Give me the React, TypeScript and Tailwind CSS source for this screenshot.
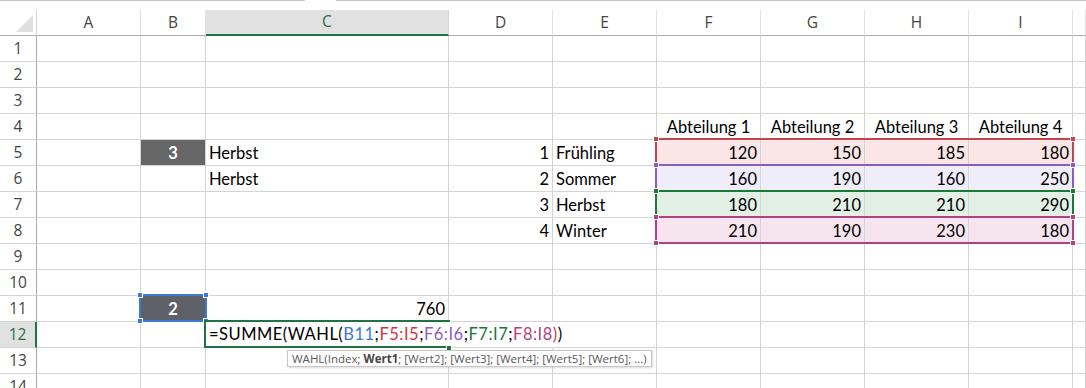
import React from "react";

const COLS = ["A", "B", "C", "D", "E", "F", "G", "H", "I", "J"];
const ROWS = Array.from({ length: 14 }, (_, i) => i + 1);

const data: Record<number, number[]> = {
  5: [120, 150, 185, 180],
  6: [160, 190, 160, 250],
  7: [180, 210, 210, 290],
  8: [210, 190, 230, 180],
};
const seasons: Record<number, [string, string]> = {
  5: ["1", "Frühling"],
  6: ["2", "Sommer"],
  7: ["3", "Herbst"],
  8: ["4", "Winter"],
};
const fills: Record<number, string> = {
  5: "bg-[#fae6e7]",
  6: "bg-[#efedf9]",
  7: "bg-[#e3f0e5]",
  8: "bg-[#f6e5ef]",
};

type Cell = { text?: string; align?: "l" | "r" | "c"; cls?: string };

function getCell(r: number, c: string): Cell {
  if (r === 4 && ["F", "G", "H", "I"].includes(c)) {
    return { text: "Abteilung " + (["F", "G", "H", "I"].indexOf(c) + 1), align: "c" };
  }
  if (r >= 5 && r <= 8) {
    if (c === "D") return { text: seasons[r][0], align: "r" };
    if (c === "E") return { text: seasons[r][1], align: "l" };
    const idx = ["F", "G", "H", "I"].indexOf(c);
    if (idx >= 0) return { text: String(data[r][idx]), align: "r", cls: fills[r] };
  }
  if (r === 5 && c === "B") return { text: "3", align: "c", cls: "bg-[#666666] text-white font-bold" };
  if ((r === 5 || r === 6) && c === "C") return { text: "Herbst", align: "l" };
  if (r === 11 && c === "B") return { text: "2", align: "c", cls: "bg-[#5e6167] text-white font-bold" };
  if (r === 11 && c === "C") return { text: "760", align: "r" };
  return {};
}

function Handle({ x, y, color, size = 6 }: { x: number; y: number; color: string; size?: number }) {
  return (
    <div
      className="absolute border border-white"
      style={{ left: x - size / 2, top: y - size / 2, width: size, height: size, backgroundColor: color }}
    />
  );
}

function RangeBox({ top, color }: { top: number; color: string }) {
  return (
    <div
      className="absolute border-2"
      style={{ left: 655, top, width: 419, height: 28, borderColor: color }}
    />
  );
}

export default function App() {
  const cellFont = { fontFamily: "Lato, 'Noto Sans', sans-serif" };
  const hdrFont = { fontFamily: "'Open Sans', 'Noto Sans', sans-serif" };
  const ranges = [
    { top: 138, color: "#c8424b" },
    { top: 164, color: "#8b5cc4" },
    { top: 190, color: "#1a7a33" },
    { top: 216, color: "#b2407f" },
  ];
  return (
    <div className="relative w-[1086px] h-[388px] overflow-hidden bg-white select-none">
      {/* top stripe */}
      <div className="flex h-[10px]">
        <div className="w-[305px] border-t border-[#c6c6c6]" />
        <div className="w-[31px]" />
        <div className="flex-1 border-t border-[#c6c6c6]" />
      </div>
      <div className="grid grid-cols-[37px_104px_65px_243px_104px_104px_104px_104px_104px_104px_1fr]">
        {/* header row */}
        <div className="h-[26px] border-r border-b border-r-[#d4d4d4] border-b-[#ababab] relative">
          <svg className="absolute left-[16px] top-[5px]" width="18" height="18" viewBox="0 0 18 18">
            <polygon points="17,0 17,17 0,17" fill="#dfdfdf" />
          </svg>
        </div>
        {COLS.map((c) => (
          <div
            key={c}
            style={hdrFont}
            className={
              c === "C"
                ? "h-[26px] border-r border-r-[#d4d4d4] border-b-2 border-b-[#217346] bg-[#e1e1e1] text-[#217346] flex items-center justify-center text-[15.5px]"
                : "h-[26px] border-r border-r-[#e1e1e1] border-b border-b-[#ababab] text-[#444444] flex items-center justify-center text-[15.5px]"
            }
          >
            {c === "J" ? "" : c}
          </div>
        ))}
        {ROWS.map((r) => (
          <React.Fragment key={r}>
            <div
              style={hdrFont}
              className={
                r === 12
                  ? "h-[26px] border-r-2 border-r-[#217346] border-b border-b-[#d4d4d4] bg-[#e1e1e1] text-[#217346] flex items-center justify-center text-[15.5px]"
                  : "h-[26px] border-r border-r-[#ababab] border-b border-b-[#d4d4d4] text-[#444444] flex items-center justify-center text-[15.5px]"
              }
            >
              {r}
            </div>
            {COLS.map((c) => {
              const cell = getCell(r, c);
              const just =
                cell.align === "r" ? "justify-end" : cell.align === "c" ? "justify-center" : "justify-start";
              return (
                <div
                  key={c}
                  style={cellFont}
                  className={`h-[26px] border-r border-b border-[#d4d4d4] flex items-center px-[3px] pt-[1px] text-[16.5px] text-black whitespace-nowrap ${just} ${cell.cls ?? ""}`}
                >
                  {cell.text}
                </div>
              );
            })}
          </React.Fragment>
        ))}
      </div>

      {/* colored range borders */}
      {ranges.map((rg) => (
        <RangeBox key={rg.top} top={rg.top} color={rg.color} />
      ))}
      {ranges.map((rg) => (
        <React.Fragment key={"h" + rg.top}>
          <Handle x={656} y={rg.top + 1} color={rg.color} />
          <Handle x={1073} y={rg.top + 1} color={rg.color} />
        </React.Fragment>
      ))}
      <Handle x={656} y={243} color="#b2407f" />
      <Handle x={1073} y={243} color="#b2407f" />

      {/* selection B11 */}
      <div className="absolute border-2 border-[#3c78d8]" style={{ left: 139, top: 294, width: 68, height: 28 }} />
      <Handle x={140} y={295} color="#3c78d8" />
      <Handle x={206} y={295} color="#3c78d8" />
      <Handle x={140} y={321} color="#3c78d8" />
      <Handle x={206} y={321} color="#3c78d8" />

      {/* edit cell C12 */}
      <div
        className="absolute bg-white flex items-center pl-[3px] pr-[3px] text-[16.5px] tracking-[0.5px] text-black whitespace-nowrap"
        style={{ ...cellFont, left: 206, top: 322, height: 25 }}
      >
        <span>=SUMME(WAHL(</span>
        <span className="text-[#3a78d4]">B11</span>
        <span>;</span>
        <span className="text-[#d1343d]">F5:I5</span>
        <span>;</span>
        <span className="text-[#8b5cc4]">F6:I6</span>
        <span>;</span>
        <span className="text-[#127a35]">F7:I7</span>
        <span>;</span>
        <span className="text-[#b2407f]">F8:I8</span>
        <span className="text-[#c53a6a]">)</span>
        <span>)</span>
      </div>
      <div
        className="absolute border-l-2 border-t-2 border-b-2 border-[#217346]"
        style={{ left: 204, top: 320, width: 246, height: 28 }}
      />
      <div className="absolute bg-[#217346] border border-white" style={{ left: 446, top: 345, width: 6, height: 6 }} />

      {/* tooltip */}
      <div
        className="absolute bg-white border border-[#c6c6c6] shadow-[1px_1px_2px_rgba(0,0,0,0.15)] flex items-center px-[4px] text-[11.5px] text-[#595959] whitespace-nowrap"
        style={{ ...hdrFont, left: 287, top: 350, height: 17 }}
      >
        <span>WAHL(Index;&nbsp;</span>
        <b className="font-bold text-[#444444]">Wert1</b>
        <span>; [Wert2]; [Wert3]; [Wert4]; [Wert5]; [Wert6]; ...)</span>
      </div>
    </div>
  );
}
